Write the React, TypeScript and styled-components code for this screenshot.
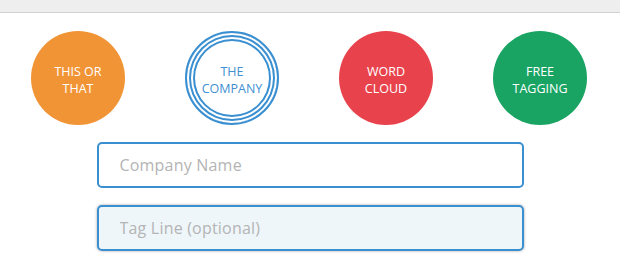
import styled, { createGlobalStyle } from 'styled-components'

const GlobalStyle = createGlobalStyle`
  html, body {
    margin: 0;
    padding: 0;
    background: #ffffff;
    font-family: 'Open Sans', 'Liberation Sans', sans-serif;
  }
`

const Page = styled.div`
  width: 620px;
  height: 274px;
  overflow: hidden;
`

const TopBar = styled.div`
  height: 12px;
  background: #eeeeee;
  border-bottom: 1px solid #d2d2d2;
`

const CircleRow = styled.div`
  display: flex;
  justify-content: center;
  gap: 60px;
  margin-top: 18px;
  padding-right: 2px;
`

const Circle = styled.div<{ $bg?: string; $ringed?: boolean }>`
  width: 94px;
  height: 94px;
  box-sizing: border-box;
  border-radius: 50%;
  display: flex;
  align-items: center;
  justify-content: center;
  padding-top: 3px;
  text-align: center;
  font-size: 12.5px;
  line-height: 17px;
  text-transform: uppercase;
  background: ${(p) => (p.$ringed ? '#ffffff' : p.$bg)};
  color: ${(p) => (p.$ringed ? '#3f8fd2' : '#ffffff')};
  border: ${(p) => (p.$ringed ? '2px solid #3a8fd0' : 'none')};
  box-shadow: ${(p) =>
    p.$ringed
      ? 'inset 0 0 0 2px #fff, inset 0 0 0 4px #3a8fd0, inset 0 0 0 6px #fff, inset 0 0 0 8px #3a8fd0'
      : 'none'};
`

const Form = styled.div`
  width: 427px;
  margin: 17px auto 0;
  display: flex;
  flex-direction: column;
  gap: 17px;
`

const Input = styled.input<{ $tinted?: boolean }>`
  box-sizing: border-box;
  width: 100%;
  height: 46px;
  padding: 0 21px;
  border: 2px solid #3a8fd0;
  border-radius: 5px;
  font-family: 'Open Sans', 'Liberation Sans', sans-serif;
  font-size: 16px;
  letter-spacing: 0.2px;
  color: #555;
  outline: none;
  background: ${(p) => (p.$tinted ? '#eef6fa' : '#ffffff')};
  box-shadow: ${(p) => (p.$tinted ? '0 0 3px rgba(0, 0, 0, 0.35)' : 'none')};

  &::placeholder {
    color: #b4b4b4;
  }
`

const circles = [
  { label: ['This or', 'that'], bg: '#f19436' },
  { label: ['The', 'Company'], ringed: true },
  { label: ['Word', 'Cloud'], bg: '#e8434c' },
  { label: ['Free', 'Tagging'], bg: '#19a463' },
]

export default function App() {
  return (
    <Page>
      <GlobalStyle />
      <TopBar />
      <CircleRow>
        {circles.map((c) => (
          <Circle key={c.label.join(' ')} $bg={c.bg} $ringed={c.ringed}>
            <span>
              {c.label[0]}
              <br />
              {c.label[1]}
            </span>
          </Circle>
        ))}
      </CircleRow>
      <Form>
        <Input placeholder="Company Name" />
        <Input $tinted placeholder="Tag Line (optional)" />
      </Form>
    </Page>
  )
}
